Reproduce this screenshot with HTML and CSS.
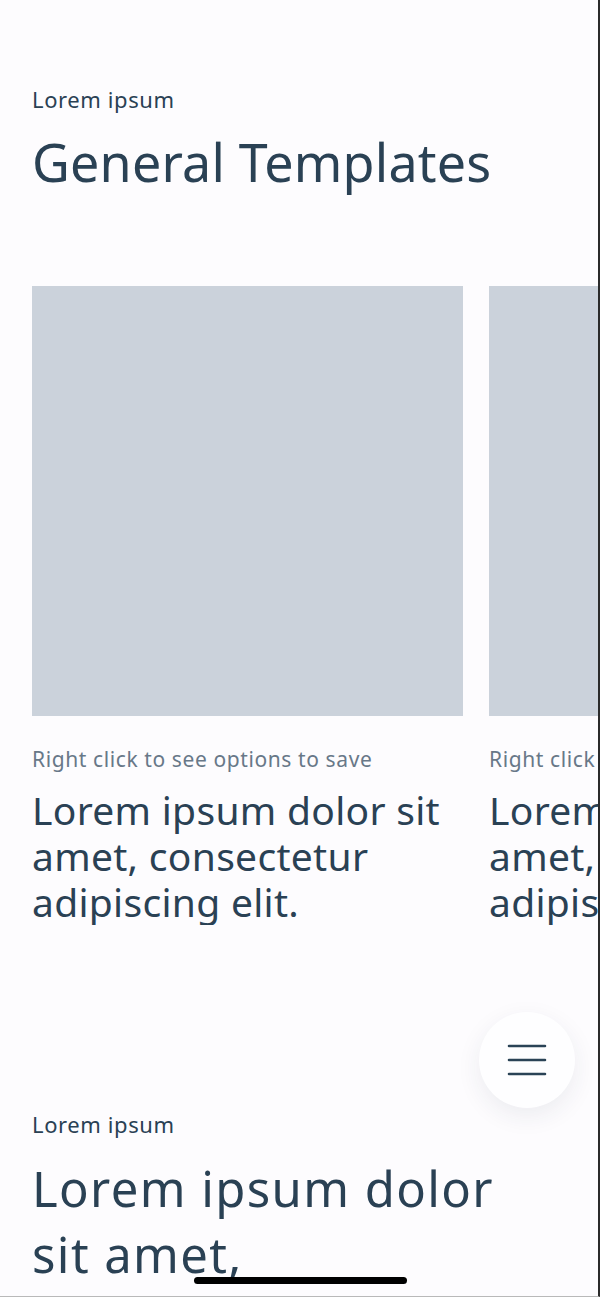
FILE: index.html
```html
<!DOCTYPE html>
<html>
<head>
  <title>General Templates</title>
  <link rel="stylesheet" href="styles.css">
</head>
<body>
  <div class="page">
    <section class="intro">
      <p class="eyebrow">Lorem ipsum</p>
      <h1 class="heading">General Templates</h1>
    </section>

    <div class="carousel">
      <div class="card">
        <div class="thumb"></div>
        <p class="hint">Right click to see options to save</p>
        <h2 class="card-title">Lorem ipsum dolor sit amet, consectetur adipiscing elit.</h2>
      </div>
      <div class="card">
        <div class="thumb"></div>
        <p class="hint">Right click to see options to save</p>
        <h2 class="card-title">Lorem ipsum dolor sit amet, consectetur adipiscing elit.</h2>
      </div>
    </div>

    <section class="next">
      <p class="eyebrow">Lorem ipsum</p>
      <h1 class="heading big">Lorem ipsum dolor sit amet, consectetur</h1>
    </section>
  </div>

  <!-- floating menu button -->
  <button class="fab" aria-label="Menu">
    <svg width="40" height="34" viewBox="0 0 40 34">
      <path d="M2 3h36M2 17h36M2 31h36" stroke="#2a4356" stroke-width="2.6" stroke-linecap="round" fill="none"/>
    </svg>
  </button>

  <div class="home-bar"></div>
</body>
</html>
```

FILE: styles.css
```css
html, body {
  margin: 0;
  height: 100%;
  overflow: hidden;
}

body {
  font-family: "Noto Sans", Inter, sans-serif;
  background-color: #fdfcfe;
  color: #2a4154;
  border-right: 2px solid #2b2b2b;
  border-bottom: 1px solid #b9b9b9;
  box-sizing: border-box;
  position: relative;
}

.page {
  height: 100%;
  overflow: hidden;
}

.intro {
  padding: 84px 32px 0;
}

.eyebrow {
  margin: 0;
  font-size: 22px;
  line-height: 30px;
  font-weight: 400;
  letter-spacing: 0.6px;
}

.heading {
  margin: 16px 0 0;
  font-size: 52px;
  line-height: 64px;
  font-weight: 400;
  letter-spacing: 0.2px;
}

.carousel {
  display: flex;
  gap: 26px;
  padding: 92px 0 0 32px;
  overflow: hidden;
}

.card {
  flex: none;
  width: 431px;
}

.thumb {
  height: 430px;
  background-color: #cbd2db;
}

.hint {
  margin: 29px 0 0;
  font-size: 21px;
  line-height: 28px;
  color: #687888;
  letter-spacing: 0.6px;
  white-space: nowrap;
}

.card-title {
  margin: 14px 0 0;
  font-size: 39px;
  line-height: 46px;
  font-weight: 400;
  letter-spacing: 0.3px;
}

.next {
  padding: 184px 32px 0;
}

.heading.big {
  max-width: 500px;
  margin-top: 16px;
  font-size: 49px;
  line-height: 66px;
  letter-spacing: 1.4px;
}

.fab {
  position: absolute;
  top: 1012px;
  right: 23px;
  width: 96px;
  height: 96px;
  border: none;
  border-radius: 50%;
  background-color: #fefeff;
  box-shadow: 0 8px 24px rgba(40, 50, 80, 0.08);
  display: flex;
  align-items: center;
  justify-content: center;
  padding: 0;
}

.home-bar {
  position: absolute;
  left: 194px;
  top: 1277px;
  width: 213px;
  height: 7px;
  border-radius: 4px;
  background-color: #000;
}
```
